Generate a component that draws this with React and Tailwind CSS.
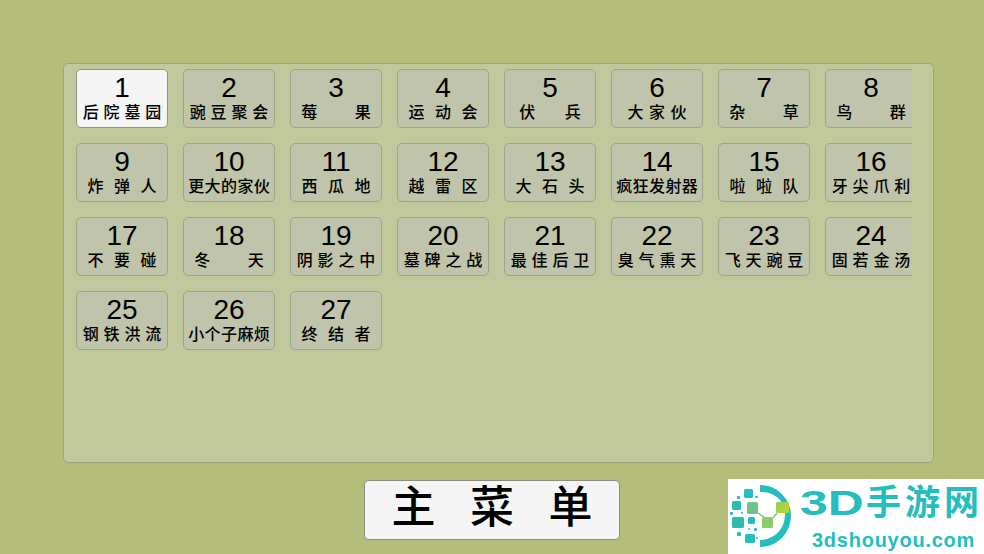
import React from 'react';

const LEVELS = [
  '后院墓园', '豌豆聚会', '莓果', '运动会', '伏兵', '大家伙', '杂草', '鸟群',
  '炸弹人', '更大的家伙', '西瓜地', '越雷区', '大石头', '疯狂发射器', '啦啦队', '牙尖爪利',
  '不要碰', '冬天', '阴影之中', '墓碑之战', '最佳后卫', '臭气熏天', '飞天豌豆', '固若金汤',
  '钢铁洪流', '小个子麻烦', '终结者',
];

// gap between the characters depends on how many there are
const GAPS = { 2: 'gap-x-[37px]', 3: 'gap-x-[10px]', 4: 'gap-x-[4.5px]', 5: 'gap-x-0' };
// these two are spaced differently from the rest
const GAP_OVERRIDES = { 伏兵: 'gap-x-[29px]', 大家伙: 'gap-x-[5px]' };

const LevelCard = ({ number, name, active }) => {
  const chars = name.split('');
  return (
    <button
      className={`flex h-[59px] w-[92px] flex-col items-center rounded-[5px] border pt-[2px] ${
        active ? 'border-[#8f9480] bg-[#f5f5f5]' : 'border-[#a0a488] bg-[#c0c4aa]'
      }`}
    >
      <span className="text-[28px] leading-[31px] text-black">{number}</span>
      <span
        className={`flex justify-center text-[16px] leading-[20px] font-medium text-black ${
          GAP_OVERRIDES[name] || GAPS[chars.length]
        }`}
      >
        {chars.map((c, i) => (
          <span key={i} className="w-[16.4px] text-center">{c}</span>
        ))}
      </span>
    </button>
  );
};

const LogoMark = () => (
  <svg viewBox="0 0 70 72" className="h-[72px] w-[70px] shrink-0">
    <defs>
      <linearGradient id="lime" x1="0" y1="0" x2="1" y2="1">
        <stop offset="0" stopColor="#8fcb5a" />
        <stop offset="1" stopColor="#c4d92e" />
      </linearGradient>
    </defs>
    <path d="M32 5 A31 31 0 0 1 32 67 L32 60 A25 25 0 0 0 52 20 A25 25 0 0 0 32 12 Z" fill="#25bdbd" />
    <path d="M30 33 L37 38 M45 38 L49 33" stroke="#7fca72" strokeWidth="1.5" />
    <rect x="16" y="9" width="9" height="9" rx="1.5" fill="#25bdbd" />
    <rect x="4" y="21" width="9" height="9" rx="1.5" fill="#2cbcae" />
    <rect x="19" y="22" width="11" height="12" rx="1.5" fill="#6cc48a" />
    <rect x="48" y="22" width="13" height="11" rx="1.5" fill="url(#lime)" />
    <rect x="4" y="37" width="12" height="11" rx="1.5" fill="#2cbcae" />
    <rect x="20" y="37" width="7" height="7" rx="1.5" fill="#25bdbd" />
    <rect x="34" y="37" width="11" height="11" rx="1.5" fill="#8ccc66" />
    <rect x="17" y="54" width="10" height="9" rx="1.5" fill="#25bdbd" />
    <rect x="9" y="16" width="3" height="3" rx="1" fill="#25bdbd" />
    <rect x="27" y="16" width="3" height="2" rx="1" fill="#25bdbd" />
    <rect x="2" y="32" width="3" height="3" rx="1" fill="#25bdbd" />
    <rect x="13" y="32" width="2" height="2" rx="1" fill="#25bdbd" />
    <rect x="9" y="52" width="4" height="4" rx="1" fill="#25bdbd" />
    <rect x="26" y="48" width="3" height="3" rx="1" fill="#25bdbd" />
    <rect x="20" y="48" width="2" height="2" rx="1" fill="#25bdbd" />
    <rect x="28" y="57" width="2" height="2" rx="1" fill="#25bdbd" />
  </svg>
);

const App = () => {
  return (
    <div
      className="relative flex h-[554px] w-[984px] flex-col items-start overflow-hidden bg-[#b5bd7c] pl-[63px] pt-[63px]"
      style={{ fontFamily: '"Liberation Sans", "Noto Sans CJK SC", sans-serif' }}
    >
      <div className="h-[400px] w-[871px] rounded-[5px] border border-[#9da37c] bg-[#c0c89c] pl-[12px] pt-[5px]">
        <div className="w-[836px] overflow-hidden">
          <div className="grid w-max grid-cols-[repeat(8,92px)] gap-x-[15px] gap-y-[15px]">
            {LEVELS.map((name, i) => (
              <LevelCard key={name} number={i + 1} name={name} active={i === 0} />
            ))}
          </div>
        </div>
      </div>

      <button className="ml-[301px] mt-[17px] flex h-[60px] w-[256px] items-center justify-center gap-x-[34.5px] rounded-[5px] border border-[#8b8d80] bg-[#f5f5f5] pb-[4px] text-[44px] font-medium leading-[50px] text-black">
        <span>主</span>
        <span>菜</span>
        <span>单</span>
      </button>

      <div className="absolute bottom-0 right-0 flex h-[75px] w-[256px] items-start bg-white pt-[1px]">
        <LogoMark />
        <div className="ml-[2px] flex w-[184px] shrink-0 flex-col whitespace-nowrap text-[#25bdbd]">
          <span className="flex h-[46px] items-center text-[35px] font-bold leading-[44px]">
            <span className="inline-block w-[66px] shrink-0 origin-left scale-x-[1.42]">3D</span>
            <span className="shrink-0 tracking-[4px]">手游网</span>
          </span>
          <span className="ml-[12px] mt-[4px] text-[20px] font-bold leading-[20px] tracking-[0.75px]">3dshouyou.com</span>
        </div>
      </div>
    </div>
  );
};

export default App;
